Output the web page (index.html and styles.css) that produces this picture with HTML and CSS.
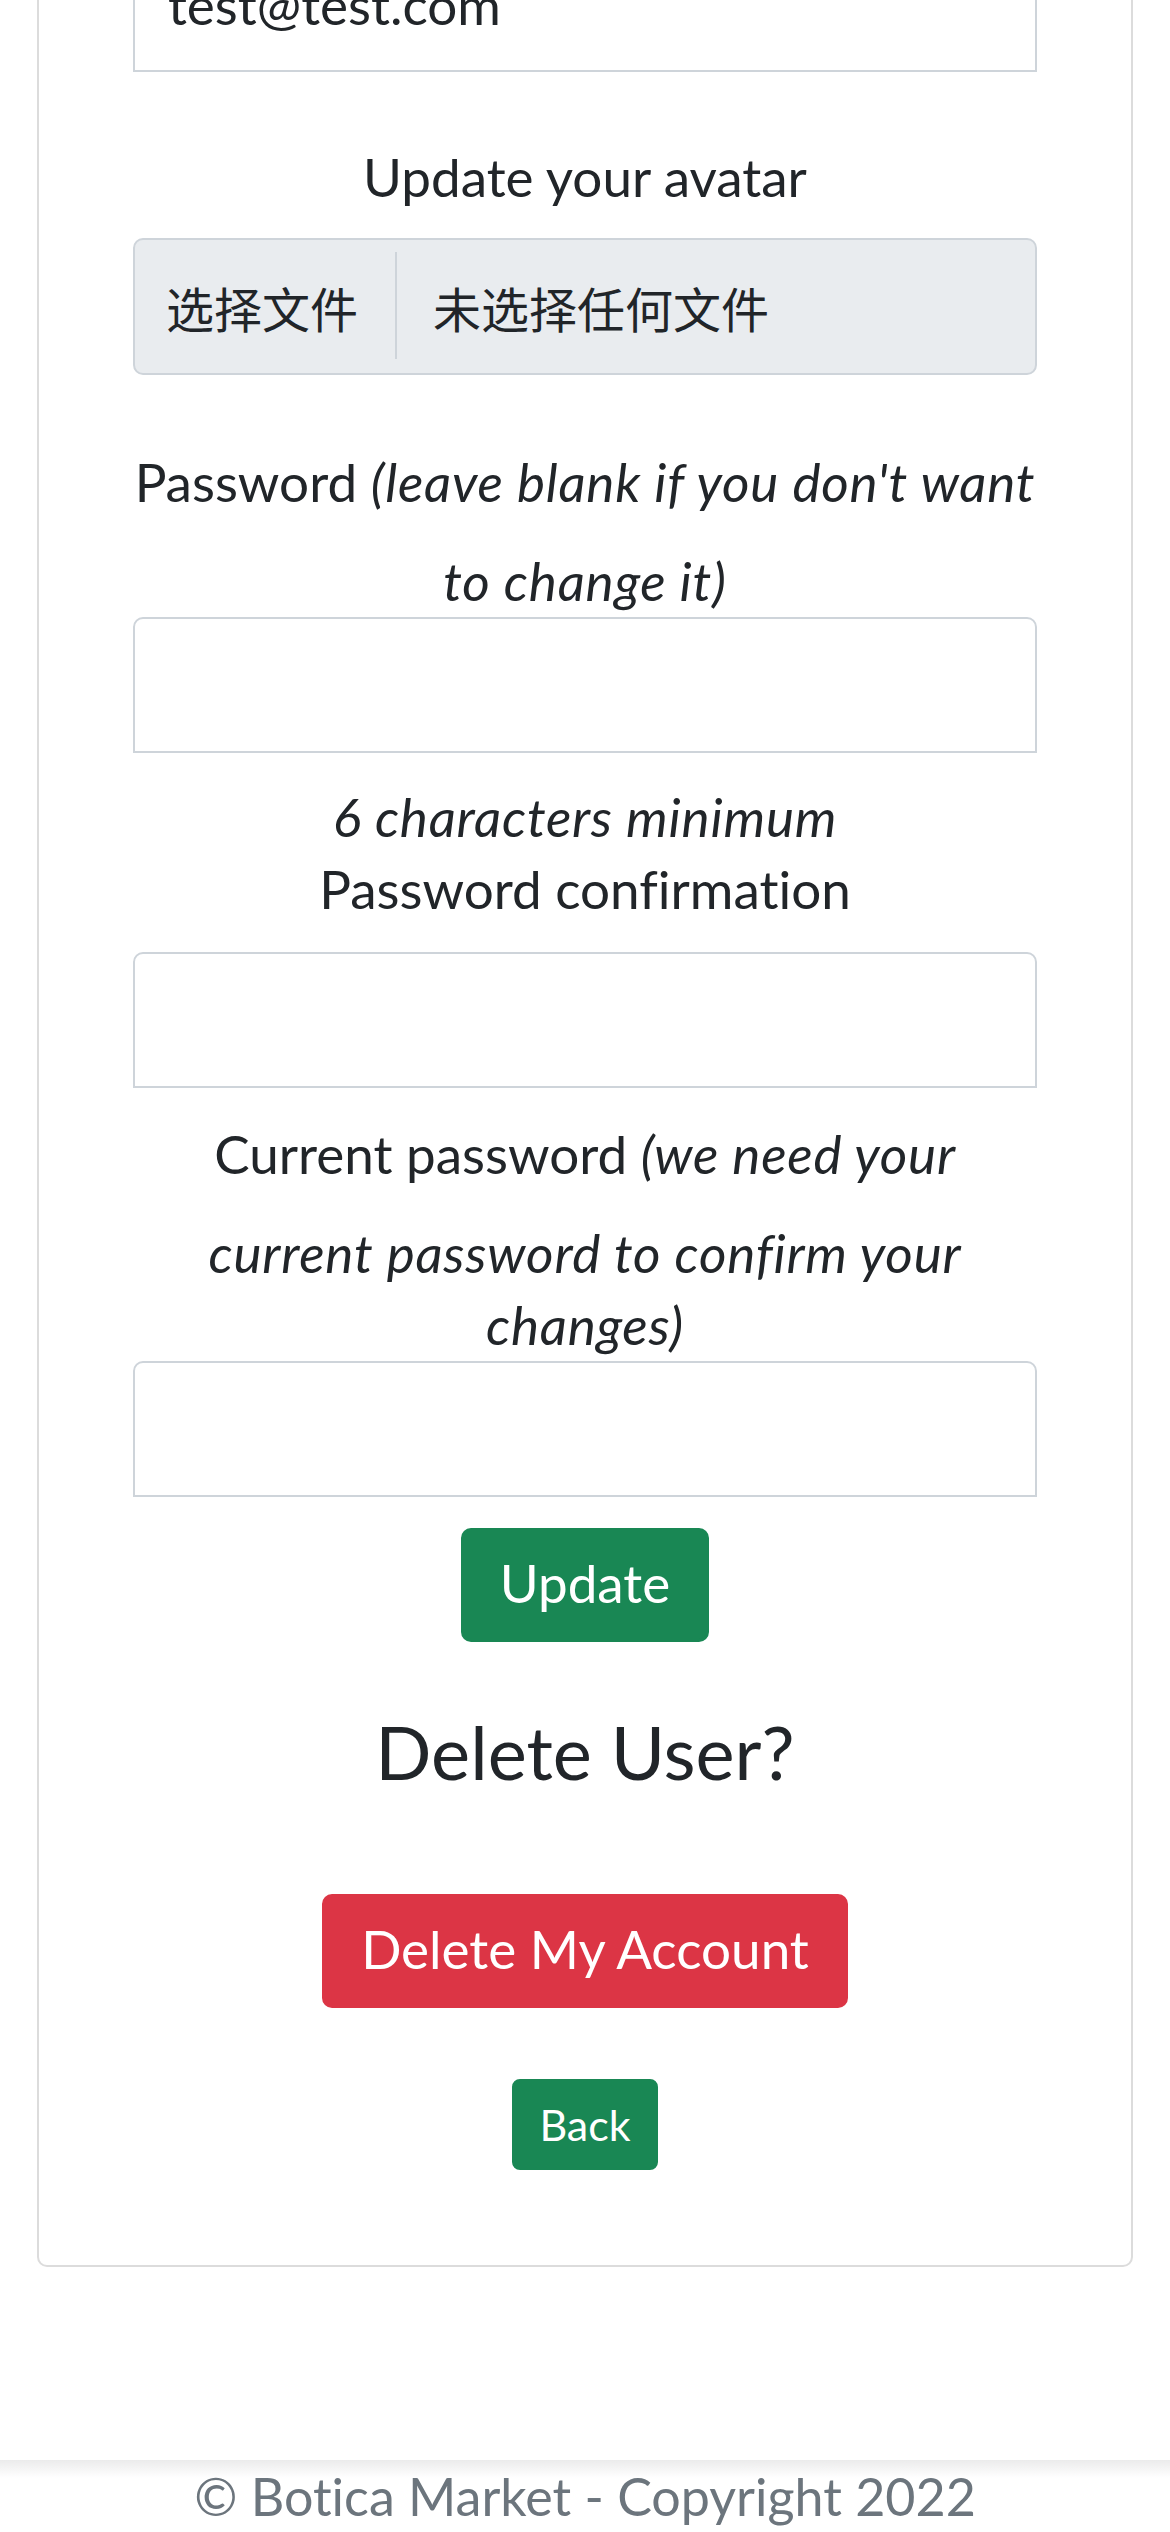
FILE: index.html
```html
<!DOCTYPE html>
<html lang="en">
<head>
<meta charset="utf-8">
<title>Edit User</title>
<link rel="stylesheet" href="styles.css">
</head>
<body>
<main class="page">
  <section class="card">
    <div class="card-body">
      <form class="user-form">
        <div class="field">
          <input class="form-control" type="email" value="test@test.com" readonly>
        </div>
        <div class="field">
          <label class="form-label form-label-block">Update your avatar</label>
          <div class="file-input">
            <span class="file-btn">选择文件</span>
            <span class="file-divider"></span>
            <span class="file-name">未选择任何文件</span>
          </div>
        </div>
        <div class="field field-password">
          <div class="label-line"><label class="form-label">Password</label> <i>(leave blank if you don't want<br>to change it)</i></div>
          <input class="form-control" type="password">
          <div class="hint"><em>6 characters minimum</em></div>
        </div>
        <div class="field">
          <div class="label-line"><label class="form-label">Password confirmation</label></div>
          <input class="form-control" type="password">
        </div>
        <div class="field field-current">
          <div class="label-line"><label class="form-label">Current password</label> <i>(we need your<br>current password to confirm your<br>changes)</i></div>
          <input class="form-control" type="password">
        </div>
        <div class="actions"><button class="btn btn-success" type="button">Update</button></div>
      </form>
      <h2 class="delete-title">Delete User?</h2>
      <div class="delete-row"><button class="btn btn-danger" type="button">Delete My Account</button></div>
      <div class="back-row"><a class="btn btn-success btn-sm" href="#">Back</a></div>
    </div>
  </section>
</main>
<footer class="footer">© Botica Market - Copyright 2022</footer>
</body>
</html>
```

FILE: styles.css
```css
* { box-sizing: border-box; }

html, body {
  margin: 0;
  padding: 0;
}

body {
  font-family: Lato, "Noto Sans CJK SC", sans-serif;
  font-size: 53px;
  line-height: 72px;
  color: #212529;
  background: #fff;
  font-variant-ligatures: none;
  font-feature-settings: "liga" 0, "dlig" 0, "clig" 0;
}

i, em {
  letter-spacing: 0.8px;
}

.card {
  margin: -100px 37px 0;
  border: 2px solid #dcdcdc;
  border-radius: 10px;
  background: #fff;
}

.card-body {
  padding: 34px 94px 95px;
  text-align: center;
}

.user-form {
  margin: 0;
}

.form-control {
  display: block;
  width: 100%;
  height: 136px;
  margin: 0;
  padding: 0 33px;
  border: 2px solid #ced4da;
  border-radius: 10px 10px 0 0;
  background: #fff;
  color: #212529;
  font-family: inherit;
  font-size: 53px;
  outline: none;
}

.form-label-block {
  display: block;
  margin: 68.5px 0 25.5px;
}

.file-input {
  display: flex;
  height: 137px;
  border: 2px solid #ced4da;
  border-radius: 10px;
  background: #e9ecef;
  font-family: "Noto Sans CJK SC", sans-serif;
  font-size: 48px;
  text-align: left;
}

.file-btn {
  display: flex;
  align-items: center;
  padding: 0 37px 0 31px;
}

.file-divider {
  width: 2px;
  margin: 12px 0 14px;
  background: #ced4da;
}

.file-name {
  display: flex;
  align-items: center;
  padding-left: 36px;
}

.field-password {
  margin-top: 70.5px;
}

.label-line {
  line-height: 72px;
  white-space: nowrap;
}

.label-line .form-label {
  display: inline-block;
  margin-bottom: 27.5px;
}

.hint {
  margin-top: 27.5px;
}

.field-current {
  margin-top: 29.5px;
}

.actions {
  display: flex;
  justify-content: center;
  margin-top: 31px;
}

.btn {
  display: inline-block;
  margin: 0;
  padding: 16px 36px 20px;
  border: 3px solid transparent;
  border-radius: 10px;
  color: #fff;
  font-family: inherit;
  font-size: 53px;
  line-height: 72px;
  text-decoration: none;
  cursor: pointer;
  font-variant-ligatures: none;
}

.btn-success {
  background: #198754;
  border-color: #198754;
}

.btn-danger {
  background: #dc3545;
  border-color: #dc3545;
}

.delete-title {
  margin: 65px 0 0;
  font-size: 74px;
  font-weight: 400;
  line-height: 89px;
}

.delete-row {
  display: flex;
  justify-content: center;
  margin-top: 98px;
}

.back-row {
  display: flex;
  justify-content: center;
  margin-top: 71px;
}

.btn-sm {
  padding: 12px 24.5px;
  font-size: 43px;
  line-height: 61px;
  border-radius: 8px;
}

.footer {
  margin-top: 193px;
  height: 72px;
  line-height: 72px;
  text-align: center;
  color: #6c757d;
  font-size: 52px;
  background: linear-gradient(#ebebeb, #fff 18px);
}
```
